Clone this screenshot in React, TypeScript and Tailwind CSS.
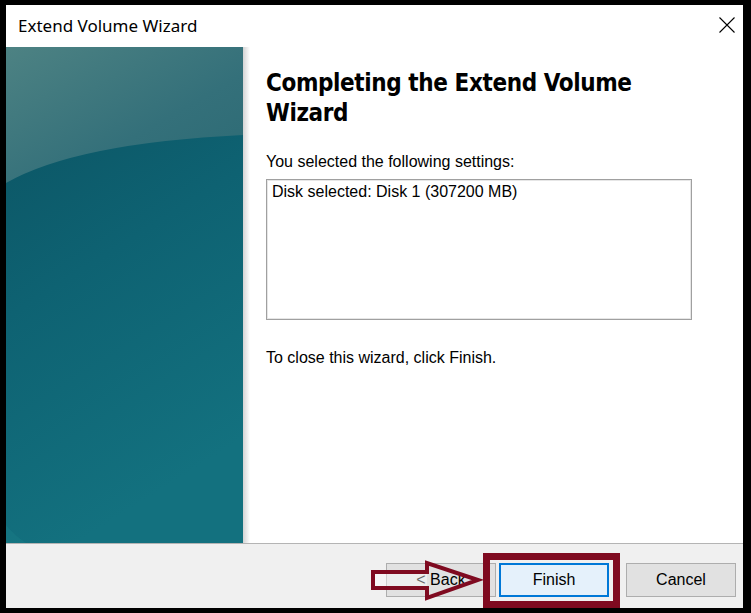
const PanelArt = () => (
  <svg width="237" height="496" viewBox="0 0 237 496" className="block">
    <defs>
      <linearGradient id="base" x1="0" y1="0" x2="0.3" y2="1">
        <stop offset="0" stopColor="#0b5160" />
        <stop offset="0.5" stopColor="#0e6272" />
        <stop offset="1" stopColor="#13717f" />
      </linearGradient>
      <linearGradient id="gloss" x1="0" y1="0" x2="1" y2="1">
        <stop offset="0" stopColor="#4d8283" />
        <stop offset="0.6" stopColor="#34707a" />
        <stop offset="1" stopColor="#2c6a74" />
      </linearGradient>
    </defs>
    <rect width="237" height="496" fill="url(#base)" />
    <path d="M0,136 Q70,96 237,88 L237,0 L0,0 Z" fill="url(#gloss)" />
    <path d="M0,478 Q8,488 20,496 L0,496 Z" fill="#1b7d88" opacity="0.45" />
  </svg>
)

const WizardButton = ({ label, primary }: { label: string; primary?: boolean }) => (
  <button
    className={
      primary
        ? 'w-[110px] h-[34px] bg-[#e5f1fb] border-2 border-[#0078d7] text-[16px] text-black'
        : 'w-[110px] h-[34px] bg-[#e1e1e1] border border-[#adadad] text-[16px] text-black'
    }
  >
    {label}
  </button>
)

const App = () => {
  return (
    <div className="w-[751px] h-[613px] bg-black pt-[5px] pl-[6px] pr-[8px] pb-[5px] font-['Liberation_Sans',Arial,sans-serif]">
      <div className="relative h-full flex flex-col bg-white">
        {/* Barra de título */}
        <div className="h-[42px] flex items-center justify-between pl-[12px] pr-[8px]">
          <span className="text-[17px] text-black font-['Noto_Sans',sans-serif]">Extend Volume Wizard</span>
          <svg width="16" height="16" viewBox="0 0 16 16" className="mb-[2px]">
            <path d="M0.5,0.5 L15.5,15.5 M15.5,0.5 L0.5,15.5" stroke="#000" strokeWidth="1.1" />
          </svg>
        </div>

        {/* Cuerpo */}
        <div className="h-[496px] flex">
          <PanelArt />
          <div className="w-[7px] bg-gradient-to-r from-[#d4d4d4] to-white" />
          <div className="flex-1 pl-[16px] pt-[21px]">
            <h1 className="text-[24px] leading-[30px] font-bold text-black font-['DejaVu_Sans_Condensed','DejaVu_Sans',Verdana,sans-serif] tracking-[-0.4px]">
              Completing the Extend Volume
              <br />
              Wizard
            </h1>
            <p className="mt-[24px] text-[16px] leading-[20px] text-black">You selected the following settings:</p>
            <div className="mt-[7px] w-[426px] h-[141px] border border-[#a0a0a0] shadow-[inset_0_0_0_1px_#e6e6e6] px-[5px] pt-[2px] text-[16px] leading-[20px] text-black">
              Disk selected: Disk 1 (307200 MB)
            </div>
            <p className="mt-[28px] text-[16px] leading-[20px] text-black">To close this wizard, click Finish.</p>
          </div>
        </div>

        {/* Botones */}
        <div className="flex-1 border-t border-[#b4b4b4] bg-[#f0f0f0] flex items-start justify-end pt-[19px] pr-[7px]">
          <WizardButton label="< Back" />
          <div className="w-[3px]" />
          <WizardButton label="Finish" primary />
          <div className="w-[17px]" />
          <WizardButton label="Cancel" />
        </div>

        {/* Resaltado rojo */}
        <div className="absolute left-[477px] top-[548px] w-[137px] h-[55px] border-[7px] border-[#7f0a20]" />
        <svg width="112" height="44" viewBox="0 0 112 44" className="absolute left-[365px] top-[554px]">
          <rect x="2" y="13" width="54" height="16" fill="#ffffff" opacity="0.4" />
          <polygon
            points="2,13 56,13 56,4 107,21 56,39 56,29 2,29"
            fill="none"
            stroke="#7f0a20"
            strokeWidth="4"
            strokeLinejoin="miter"
          />
        </svg>
      </div>
    </div>
  )
}

export default App
